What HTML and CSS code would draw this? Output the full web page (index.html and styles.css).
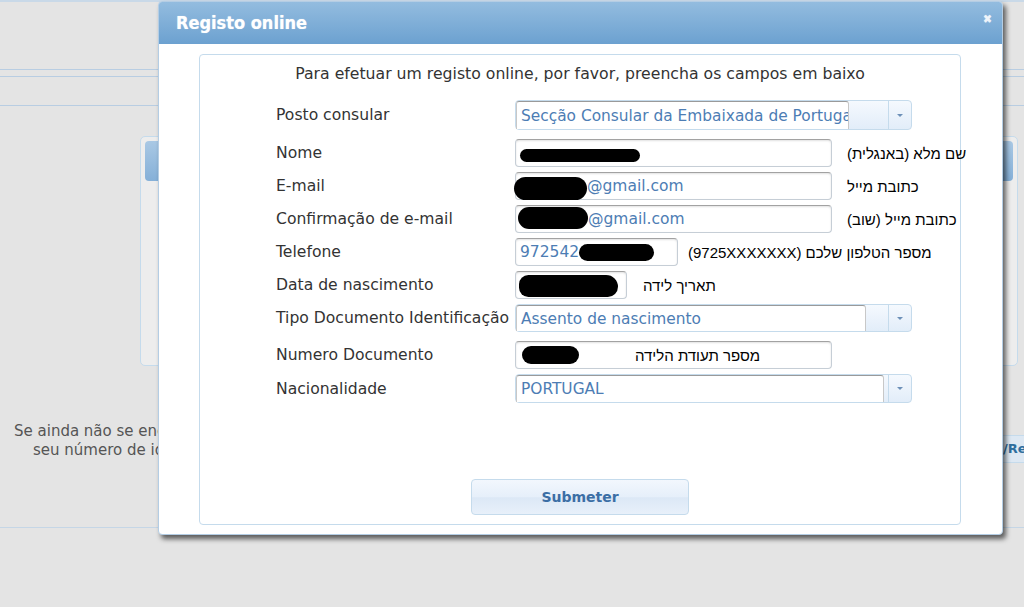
FILE: index.html
```html
<!DOCTYPE html>
<html lang="pt">

<head>
    <meta charset="UTF-8">
    <meta name="viewport" content="width=device-width, initial-scale=1.0">
    <title>Registo online</title>
    <link rel="stylesheet" href="styles.css">
</head>

<body>
    <div class="page">
        <div class="masthead"></div>
        <div class="subbar"></div>
        <div class="navbar"></div>
        <div class="panel">
            <div class="panel-head"></div>
        </div>
        <div class="info-row">
            <div class="info-text">
                <p>Se ainda não se encontra registado, por favor efetue o seu registo online</p>
                <p class="indent">seu número de identificação consular</p>
            </div>
            <div class="info-btn">/Re</div>
        </div>
    </div>

    <div class="dialog">
        <div class="dialog-title">
            <span>Registo online</span>
            <span class="close">&#x2716;</span>
        </div>
        <div class="dialog-body">
            <form class="form-box" id="registo-form">
                <p class="intro">Para efetuar um registo online, por favor, preencha os campos em baixo</p>

                <div class="rows">
                    <div class="row row-select">
                        <label class="label">Posto consular</label>
                        <div class="select">
                            <div class="select-value w-posto">Secção Consular da Embaixada de Portugal</div>
                            <div class="select-fill"></div>
                            <div class="select-btn"><span class="arrow"></span></div>
                        </div>
                    </div>
                    <div class="row">
                        <label class="label">Nome</label>
                        <div class="field"><span class="blob blob-name"></span></div>
                        <span class="note" dir="rtl">שם מלא (באנגלית)</span>
                    </div>
                    <div class="row">
                        <label class="label">E-mail</label>
                        <div class="field"><span class="blob blob-mail"></span><span>@gmail.com</span></div>
                        <span class="note" dir="rtl">כתובת מייל</span>
                    </div>
                    <div class="row">
                        <label class="label">Confirmação de e-mail</label>
                        <div class="field"><span class="blob blob-mail2"></span><span>@gmail.com</span></div>
                        <span class="note" dir="rtl">כתובת מייל (שוב)</span>
                    </div>
                    <div class="row">
                        <label class="label">Telefone</label>
                        <div class="field field-tel"><span>972542</span><span class="blob blob-tel"></span></div>
                        <span class="note note-tel" dir="rtl">מספר הטלפון שלכם (9725XXXXXXX)</span>
                    </div>
                    <div class="row">
                        <label class="label">Data de nascimento</label>
                        <div class="field field-date"><span class="blob blob-date"></span></div>
                        <span class="note note-date" dir="rtl">תאריך לידה</span>
                    </div>
                    <div class="row row-select">
                        <label class="label">Tipo Documento Identificação</label>
                        <div class="select select-sm">
                            <div class="select-value w-tipo">Assento de nascimento</div>
                            <div class="select-fill"></div>
                            <div class="select-btn"><span class="arrow"></span></div>
                        </div>
                    </div>
                    <div class="row">
                        <label class="label">Numero Documento</label>
                        <div class="field"><span class="blob blob-doc"></span><span class="doc-note" dir="rtl">מספר תעודת הלידה</span></div>
                    </div>
                    <div class="row">
                        <label class="label">Nacionalidade</label>
                        <div class="select select-md">
                            <div class="select-value w-nac">PORTUGAL</div>
                            <div class="select-fill"></div>
                            <div class="select-btn"><span class="arrow"></span></div>
                        </div>
                    </div>
                </div>

                <div class="actions">
                    <button type="submit" class="submit">Submeter</button>
                </div>
            </form>
        </div>
    </div>
</body>

</html>
```

FILE: styles.css
```css
* {
    box-sizing: border-box;
}

body {
    margin: 0;
    width: 1024px;
    height: 607px;
    overflow: hidden;
    background-color: #e4e4e4;
    font-family: "DejaVu Sans", Verdana, sans-serif;
    position: relative;
}

/* page behind the dialog */
.masthead {
    height: 70px;
    border-top: 2px solid #c9d9e8;
    border-bottom: 1px solid #b8cde2;
}

.subbar {
    height: 7px;
    border-bottom: 1px solid #b8cde2;
}

.navbar {
    height: 29px;
    border-bottom: 1px solid #b8cde2;
}

.panel {
    margin: 30px 0 0 140px;
    width: 878px;
    height: 230px;
    border: 1px solid #c5dbec;
    border-radius: 5px;
    background-color: #ededed;
    padding: 4px;
}

.panel-head {
    height: 40px;
    border-radius: 4px;
    background: linear-gradient(#a9c8e4, #85b0d8);
}

.info-row {
    display: flex;
    height: 162px;
    border-bottom: 1px solid #c5d6e6;
    padding-top: 56px;
}

.info-text {
    width: 998px;
    flex-shrink: 0;
    padding-left: 14px;
    color: #555;
    font-size: 15px;
    white-space: nowrap;
}

.info-text p {
    margin: 0;
    line-height: 19px;
}

.info-text .indent {
    padding-left: 19px;
}

.info-btn {
    width: 26px;
    flex-shrink: 0;
    margin-top: 13px;
    height: 28px;
    padding: 5px 0 0 4px;
    background-color: #dde8f3;
    border: 1px solid #c5dbec;
    border-right: none;
    color: #2e6e9e;
    font-weight: bold;
    font-size: 13px;
    white-space: nowrap;
}

/* dialog */
.dialog {
    position: absolute;
    left: 158px;
    top: 1px;
    width: 845px;
    height: 534px;
    background-color: #fff;
    border: 1px solid #b4cde4;
    border-radius: 4px;
    box-shadow: 3px 4px 5px rgba(0, 0, 0, 0.6);
    display: flex;
    flex-direction: column;
}

.dialog-title {
    height: 42px;
    flex-shrink: 0;
    border-radius: 3px 3px 0 0;
    background: linear-gradient(#93bcdf, #6ca1d0);
    color: #fff;
    display: flex;
    align-items: center;
    justify-content: space-between;
    padding: 0 10px 2px 17px;
    font-family: "DejaVu Sans Condensed", "DejaVu Sans", sans-serif;
    font-weight: bold;
    font-size: 18px;
    text-shadow: 0 0 1px rgba(255, 255, 255, 0.6);
}

.close {
    font-size: 12px;
    color: #eef4fa;
    margin-top: -6px;
}

.dialog-body {
    flex: 1;
    padding: 10px 41px 9px 40px;
}

.form-box {
    height: 100%;
    border: 1px solid #c5dbec;
    border-radius: 4px;
    display: flex;
    flex-direction: column;
    padding: 0 0 9px 76px;
}

.intro {
    margin: 9px 0 16px -76px;
    text-align: center;
    line-height: 20px;
    font-size: 15.7px;
    color: #333;
}

.rows {
    display: flex;
    flex-direction: column;
    gap: 5px;
}

.row {
    display: flex;
    align-items: center;
}

.row-select {
    margin-bottom: 4px;
}

.label {
    width: 239px;
    flex-shrink: 0;
    font-size: 15.6px;
    color: #333;
    white-space: nowrap;
}

.field {
    width: 317px;
    height: 28px;
    flex-shrink: 0;
    border: 1px solid #c6ced6;
    border-top-color: #a2a2a2;
    border-radius: 4px;
    box-shadow: inset 0 1px 2px rgba(0, 0, 0, 0.12);
    display: flex;
    align-items: center;
    padding-left: 4px;
    color: #4d7db4;
    font-size: 15.5px;
    white-space: nowrap;
}

.field-tel {
    width: 163px;
}

.field-date {
    width: 112px;
}

.blob {
    display: inline-block;
    background-color: #000;
    border-radius: 12px;
    flex-shrink: 0;
}

.blob-name {
    width: 120px;
    height: 13px;
    margin-top: 4px;
}

.blob-mail {
    width: 73px;
    height: 23px;
    margin: 4px 0 0 -6px;
}

.blob-mail2 {
    width: 70px;
    height: 22px;
    margin: -3px 0 0 -2px;
}

.blob-tel {
    width: 75px;
    height: 17px;
    border-radius: 9px;
}

.blob-date {
    width: 99px;
    height: 22px;
    margin: 2px 0 0 -1px;
    border-radius: 11px 14px 12px 11px;
}

.blob-doc {
    width: 57px;
    height: 18px;
    margin-left: 2px;
    border-radius: 9px;
}

.doc-note {
    margin-left: 56px;
    color: #000;
    font-family: "Liberation Sans", Arial, sans-serif;
    font-size: 15px;
}

.note {
    flex-shrink: 0;
    margin-left: 15px;
    font-family: "Liberation Sans", Arial, sans-serif;
    font-size: 15px;
    color: #000;
    white-space: nowrap;
}

.note-tel {
    margin-left: 10px;
}

.note-date {
    margin-left: 16px;
}

/* select boxes */
.select {
    width: 397px;
    height: 30px;
    flex-shrink: 0;
    display: flex;
    border: 1px solid #c5dbec;
    border-radius: 4px;
    background: linear-gradient(#f5f9fe, #e2edf9);
}

.select-sm {
    height: 28px;
}

.select-md {
    height: 29px;
}

.select-value {
    background-color: #fff;
    border: 1px solid #c8c8c8;
    border-top-color: #9a9a9a;
    border-bottom: none;
    border-radius: 3px 3px 0 0;
    padding-left: 4px;
    color: #4d7db4;
    font-size: 15.4px;
    white-space: nowrap;
    overflow: hidden;
    display: flex;
    align-items: center;
}

.w-posto {
    width: 333px;
}

.w-tipo {
    width: 350px;
}

.w-nac {
    width: 368px;
}

.select-fill {
    flex: 1;
}

.select-btn {
    width: 23px;
    border-left: 1px solid #c5dbec;
    display: flex;
    align-items: center;
    justify-content: center;
}

.arrow {
    width: 0;
    height: 0;
    border-left: 3px solid transparent;
    border-right: 3px solid transparent;
    border-top: 3px solid #6d90b8;
}

.actions {
    margin-top: auto;
    display: flex;
    justify-content: center;
    margin-left: -76px;
}

.submit {
    width: 218px;
    height: 36px;
    border: 1px solid #c5dbec;
    border-radius: 4px;
    background: linear-gradient(#f2f7fd 0%, #e6effa 50%, #dce8f6 52%, #e8f0fa 100%);
    color: #3b6ea5;
    font-family: "DejaVu Sans", Verdana, sans-serif;
    font-weight: bold;
    font-size: 14px;
    cursor: pointer;
}
```
